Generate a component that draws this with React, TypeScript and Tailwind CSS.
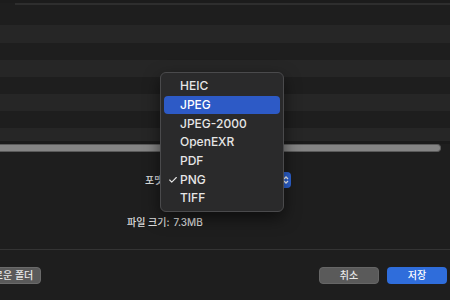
import { Check } from 'lucide-react';

const formats = ['HEIC', 'JPEG', 'JPEG-2000', 'OpenEXR', 'PDF', 'PNG', 'TIFF'];
const font = { fontFamily: 'Inter, "Noto Sans CJK KR", sans-serif' };

function FileRows() {
  return (
    <div className="flex flex-col">
      <div className="h-[3px] bg-[#1c1c1c]" />
      <div className="h-[2px] bg-[#2e2e2e] ml-[15px]" />
      <div className="h-[20px] bg-[#1e1e1e]" />
      <div className="h-[18px] bg-[#262626]" />
      <div className="h-[17px] bg-[#1e1e1e]" />
      <div className="h-[17px] bg-[#262626]" />
      <div className="h-[17px] bg-[#1e1e1e]" />
      <div className="h-[17px] bg-[#262626]" />
      <div className="h-[17px] bg-[#1e1e1e]" />
      <div className="h-[13px] bg-[#262626]" />
      <div className="h-[3px] bg-[#1a1a1a]" />
      <div className="h-[8px] w-[441px] rounded-r-full bg-[#848484] border-y border-r border-[#5a5a5a]" />
    </div>
  );
}

function FormatMenu() {
  return (
    <div className="absolute left-[160px] top-[72px] w-[124px] rounded-[6px] border border-[#4a4a4c] bg-[#2a2a2b] px-[3px] pt-[4px] pb-[3px] shadow-[0_6px_16px_rgba(0,0,0,0.55)]">
      {formats.map(f => (
        <div
          key={f}
          className={`relative flex h-[18.7px] items-center rounded-[4px] pl-[16px] text-[12px] font-medium ${
            f === 'JPEG' ? 'bg-[#2d5ac6] text-white' : 'text-[#e6e6e6]'
          }`}
        >
          {f === 'PNG' && <Check className="absolute left-[4px] h-[10px] w-[10px]" strokeWidth={2.6} />}
          {f}
        </div>
      ))}
    </div>
  );
}

export default function App() {
  return (
    <div className="relative h-[300px] w-[450px] overflow-hidden bg-[#1e1e1e] text-[#dcdcdc]" style={font}>
      <FileRows />

      <div className="flex h-[97px] flex-col">
        <div className="mt-[20px] flex h-[16px] items-center">
          <span className="ml-[145px] text-[10px] font-medium">포맷:</span>
          <div className="ml-auto mr-[159px] flex h-[16px] w-[110px] items-center justify-end rounded-[4px] bg-[#2d63d4] pr-[2px]">
            <svg width="6" height="10" viewBox="0 0 6 10" fill="none" stroke="white" strokeWidth="1.3">
              <path d="M1 4 L3 2 L5 4" />
              <path d="M1 6 L3 8 L5 6" />
            </svg>
          </div>
        </div>
        <div className="mt-[27px] flex items-center text-[10px] font-medium">
          <span className="ml-[127px]">파일 크기:</span>
          <span className="ml-[4px]">7.3MB</span>
        </div>
      </div>

      <div className="h-px bg-[#343434]" />

      <div className="mt-[17px] flex items-center">
        <button className="-ml-[23px] flex h-[17px] w-[64px] items-center justify-center rounded-[4px] border border-[#6a6a6a] bg-[#5a5a5a] text-[10px] font-medium text-[#e8e8e8]">
          새로운 폴더
        </button>
        <button className="ml-auto flex h-[17px] w-[60px] items-center justify-center rounded-[4px] border border-[#666] bg-[#5a5a5a] text-[10px] font-medium text-[#e8e8e8]">
          취소
        </button>
        <button className="ml-[8px] mr-[3px] flex h-[17px] w-[60px] items-center justify-center rounded-[4px] bg-[#2f6ddb] text-[10px] font-medium text-white">
          저장
        </button>
      </div>

      <FormatMenu />
    </div>
  );
}
